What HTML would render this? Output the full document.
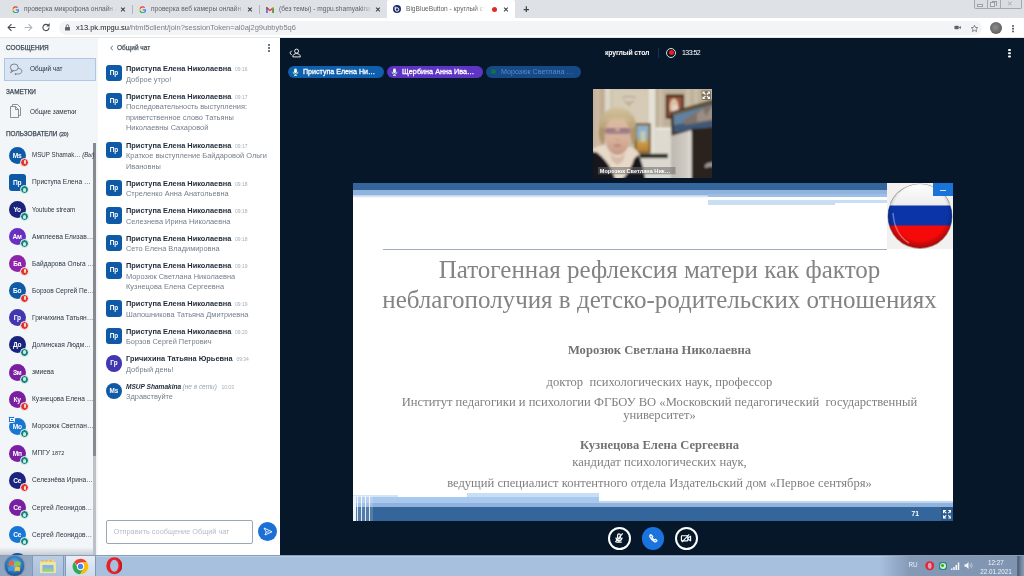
<!DOCTYPE html>
<html lang="ru">
<head>
<meta charset="utf-8">
<title>BigBlueButton - круглый стол</title>
<style>
*{box-sizing:border-box;margin:0;padding:0}
html,body{width:1024px;height:576px;overflow:hidden;background:#06172a}
body{position:relative;font-family:"Liberation Sans",sans-serif;color:#1b2a3a;will-change:transform}
.abs{position:absolute}
.nw{white-space:nowrap}
/* ---------- browser chrome ---------- */
#tabbar{left:0;top:0;width:1024px;height:18px;background:#dee1e6}
#addr{left:0;top:18px;width:1024px;height:19.500px;background:#fff;border-bottom:1px solid #e4e6ea}
.tab{top:0;height:18px;font-size:6.6px;color:#5f6368;line-height:18px}
.tab .t{position:absolute;top:.2px;white-space:nowrap;overflow:hidden;-webkit-mask-image:linear-gradient(90deg,#000 88%,transparent 100%);mask-image:linear-gradient(90deg,#000 88%,transparent 100%)}
.tab .x{position:absolute;top:.5px;font-size:6.5px;color:#3c4043;font-weight:bold}
#omni{left:59px;top:21px;width:923px;height:14px;border-radius:7px;background:#f3f4f6}
/* ---------- sidebar ---------- */
#side{left:0;top:37.5px;width:98.3px;height:518px;background:#f3f6f9}
#chat{left:98.3px;top:37.5px;width:181.7px;height:518px;background:#fff}
.sh{left:6px;font-size:6.6px;color:#3c4854;-webkit-text-stroke:.25px #3c4854;letter-spacing:0;white-space:nowrap;line-height:8px;transform:scaleX(.97);transform-origin:0 0}
.u{left:0;width:96px;height:27px}
.u .av{position:absolute;left:8.7px;top:4.5px;width:17px;height:17px;border-radius:50%;color:#fff;font-size:6.6px;font-weight:bold;text-align:center;line-height:17px;letter-spacing:-.2px}
.u .av.sq{border-radius:3px}
.u .nm{position:absolute;left:31.7px;top:8.1px;font-size:7.1px;color:#2a3642;white-space:nowrap;line-height:10px;transform:scaleX(.93);transform-origin:0 0}
.u .bd{position:absolute;left:20.2px;top:15.900px;width:9px;height:9px;border-radius:50%;border:1px solid #f3f6f9}
.bd.r{background:#e3342a}
.bd.r:after{content:"";position:absolute;left:2.4px;top:1.3px;width:2.2px;height:4px;border-radius:1.1px;background:#fbdcda}
.bd.g:after{content:"";position:absolute;left:2px;top:1.5px;width:3px;height:4px;border-radius:1.5px;background:#c9ebe4}
.bd.g{background:#12857a}
/* ---------- chat ---------- */
.m{left:8px;width:175px}
.m .av{position:absolute;left:0;top:.9px;width:16px;height:16.2px;border-radius:3px;background:#0f5aa6;color:#fff;font-size:6.4px;font-weight:bold;text-align:center;line-height:16px}
.m .av.c{border-radius:50%}
.m .n{position:absolute;left:20px;top:-.2px;font-size:8px;font-weight:bold;color:#1d2a38;white-space:nowrap;line-height:9px;transform:scaleX(.925);transform-origin:0 0}
.m .n i{font-weight:bold}
.m .n s{text-decoration:none;font-weight:normal;font-size:5.4px;color:#a3adb8;margin-left:4px;font-style:normal}
.m .b{position:absolute;left:20px;top:10.2px;font-size:8px;color:#737e8a;white-space:nowrap;line-height:10.6px;transform:scaleX(.925);transform-origin:0 0}
/* ---------- main ---------- */
#main{left:280px;top:37.5px;width:744px;height:518px;background:#06172a}
.pill{top:65.6px;height:12px;border-radius:6px;color:#fff;font-size:7.3px;line-height:12px;white-space:nowrap}
/* ---------- slide ---------- */
#slide{left:352.5px;top:183px;width:600.5px;height:338px;background:#fff;overflow:hidden}
.st{font-family:"Liberation Serif",serif;color:#7f7f7f;white-space:nowrap;text-align:center;left:0;width:600px}
/* ---------- taskbar ---------- */
#task{left:0;top:554.6px;width:1024px;height:22px;background:#a7c0dd;border-top:1px solid #8b9db6;box-shadow:inset 0 1px 0 #b9cde6}
</style>
</head>
<body>
<!-- TABBAR -->
<div id="tabbar" class="abs"></div>
<div class="abs" style="left:386.500px;top:0;width:128.500px;height:18px;background:#fff;border-radius:2px 2px 0 0"></div>
<div class="abs" style="left:132px;top:5px;width:1px;height:9px;background:#b2b6be"></div>
<div class="abs" style="left:259px;top:5px;width:1px;height:9px;background:#b2b6be"></div>
<!-- tab 1 -->
<svg class="abs" style="left:11.800px;top:5.500px" width="7.500" height="7.500" viewBox="0 0 18 18"><path d="M9 3.5a5.5 5.5 0 0 1 3.7 1.4l2-2A8.5 8.5 0 0 0 1.4 5.2l2.4 1.9A5.5 5.5 0 0 1 9 3.500z" fill="#ea4335"/><path d="M3.800 10.900a5.500 5.500 0 0 1 0-3.800L1.400 5.200a8.500 8.500 0 0 0 0 7.600z" fill="#fbbc05"/><path d="M9 17.500a8.400 8.400 0 0 0 5.700-2.100l-2.300-1.800A5.500 5.500 0 0 1 3.800 10.900l-2.400 1.900A8.500 8.500 0 0 0 9 17.500z" fill="#34a853"/><path d="M17.300 9.200c0-.6-.1-1.200-.2-1.700H9v3.300h4.700a4 4 0 0 1-1.300 2.800l2.300 1.800a8.300 8.300 0 0 0 2.600-6.200z" fill="#4285f4"/></svg>
<div class="abs tab" style="left:24px;width:96px"><span class="t" style="left:0;width:94px">проверка микрофона онлайн -</span></div>
<div class="abs tab" style="left:120px"><span class="x" style="left:0">✕</span></div>
<!-- tab 2 -->
<svg class="abs" style="left:138.800px;top:5.500px" width="7.500" height="7.500" viewBox="0 0 18 18"><path d="M9 3.500a5.500 5.500 0 0 1 3.700 1.400l2-2A8.500 8.500 0 0 0 1.400 5.200l2.400 1.900A5.500 5.500 0 0 1 9 3.500z" fill="#ea4335"/><path d="M3.800 10.900a5.500 5.500 0 0 1 0-3.800L1.400 5.200a8.500 8.500 0 0 0 0 7.600z" fill="#fbbc05"/><path d="M9 17.500a8.400 8.400 0 0 0 5.700-2.100l-2.300-1.800A5.500 5.500 0 0 1 3.800 10.900l-2.400 1.900A8.500 8.500 0 0 0 9 17.500z" fill="#34a853"/><path d="M17.300 9.200c0-.6-.1-1.200-.2-1.700H9v3.300h4.700a4 4 0 0 1-1.300 2.800l2.300 1.800a8.300 8.300 0 0 0 2.600-6.200z" fill="#4285f4"/></svg>
<div class="abs tab" style="left:151px;width:96px"><span class="t" style="left:0;width:95px">проверка веб камеры онлайн -</span></div>
<div class="abs tab" style="left:247px"><span class="x" style="left:0">✕</span></div>
<!-- tab 3 gmail -->
<svg class="abs" style="left:266px;top:6.500px" width="8" height="6" viewBox="0 0 20 15"><path d="M0 2v13h4V6l6 4.500L16 6v9h4V2l-2-2-8 6-8-6z" fill="#ea4335"/><path d="M0 2v13h4V5z" fill="#4285f4"/><path d="M20 2v13h-4V5z" fill="#34a853"/><path d="M0 2l4 3V1.200L2 0z" fill="#c5221f"/><path d="M20 2l-4 3V1.200L18 0z" fill="#fbbc05"/></svg>
<div class="abs tab" style="left:279px;width:94px"><span class="t" style="left:0;width:93px">(без темы) - mgpu.shamyakina©</span></div>
<div class="abs tab" style="left:375px"><span class="x" style="left:0">✕</span></div>
<!-- tab 4 active -->
<svg class="abs" style="left:393.300px;top:5px" width="8" height="8" viewBox="0 0 18 18"><circle cx="9" cy="9" r="9" fill="#1a2a6c"/><circle cx="9" cy="10" r="4" fill="none" stroke="#fff" stroke-width="2.200"/><path d="M5 3.500v7" stroke="#fff" stroke-width="2.200"/></svg>
<div class="abs tab" style="left:406px;width:80px"><span class="t" style="left:0;width:79px">BigBlueButton - круглый сто</span></div>
<div class="abs" style="left:492px;top:6.500px;width:5.200px;height:5.200px;border-radius:50%;background:#e02a2a"></div>
<div class="abs tab" style="left:503px"><span class="x" style="left:0">✕</span></div>
<div class="abs" style="left:523.300px;top:2.800px;font-size:10.500px;line-height:12px;color:#3c4043;font-weight:bold">+</div>
<!-- window controls -->
<div class="abs" style="left:973.500px;top:0;width:48px;height:8.500px;border:1px solid #a4a9b1;border-top:0;border-radius:0 0 2px 2px;background:#dadde2"></div>
<div class="abs" style="left:986.500px;top:0;width:1px;height:8px;background:#a4a9b1"></div>
<div class="abs" style="left:999.500px;top:0;width:1px;height:8px;background:#a4a9b1"></div>
<div class="abs" style="left:977px;top:4px;width:6px;height:3px;border:1px solid #9a9fa6;background:#eceef0"></div>
<div class="abs" style="left:990px;top:1.500px;width:5px;height:5px;border:1px solid #9a9fa6;background:#e4e6ea"></div><div class="abs" style="left:991.500px;top:.500px;width:5px;height:5px;border:1px solid #9a9fa6;border-left:0;border-bottom:0"></div>
<div class="abs nw" style="left:1007px;top:0;font-size:6.500px;line-height:8px;color:#a8adb4">✕</div>
<!-- ADDRESS BAR -->
<div id="addr" class="abs"></div>
<div id="omni" class="abs"></div>
<svg class="abs" style="left:7px;top:23px" width="9" height="9" viewBox="0 0 16 16"><path d="M15 8H2M8 2L2 8l6 6" fill="none" stroke="#4a4d51" stroke-width="2"/></svg>
<svg class="abs" style="left:24px;top:23px" width="9" height="9" viewBox="0 0 16 16"><path d="M1 8h13M8 2l6 6-6 6" fill="none" stroke="#b4b7bb" stroke-width="2"/></svg>
<svg class="abs" style="left:41px;top:23px" width="10" height="9" viewBox="0 0 16 16"><path d="M13.500 8A5.500 5.500 0 1 1 11.800 4" fill="none" stroke="#4a4d51" stroke-width="2"/><path d="M14.500 0v6h-6z" fill="#4a4d51"/></svg>
<svg class="abs" style="left:64.800px;top:24.300px" width="5" height="6.600" viewBox="0 0 12 16"><rect x="0" y="7" width="12" height="9" rx="1.500" fill="#5f6368"/><path d="M3 7V4.500a3 3 0 0 1 6 0V7" fill="none" stroke="#5f6368" stroke-width="2"/></svg>
<div class="abs nw" style="left:76px;top:22px;font-size:7.5px;line-height:12px;color:#202124">x13.pk.mpgu.su<span style="color:#7a7f85">/html5client/join?sessionToken=al0aj2g9ubbyb5q6</span></div>
<!-- right icons -->
<svg class="abs" style="left:953.800px;top:25.300px" width="7.300" height="5" viewBox="0 0 18 14"><rect x="0" y="2" width="12" height="10" rx="2" fill="#5f6368"/><path d="M12 7l6-4.500v9z" fill="#5f6368"/></svg>
<svg class="abs" style="left:970px;top:23.500px" width="9" height="9" viewBox="0 0 24 24"><path d="M12 3.500l2.600 5.600 6.100.7-4.500 4.200 1.200 6-5.400-3-5.400 3 1.200-6-4.500-4.200 6.100-.7z" fill="none" stroke="#5f6368" stroke-width="2"/></svg>
<div class="abs" style="left:989.800px;top:21.600px;width:12.300px;height:12.300px;border-radius:50%;background:radial-gradient(circle at 45% 45%,#8e8e8e,#6a6a6a 55%,#4a4a4a)"></div>
<div class="abs" style="left:1012.100px;top:25px;width:1.600px;height:1.600px;border-radius:50%;background:#5f6368;box-shadow:0 2.700px 0 #5f6368,0 5.400px 0 #5f6368"></div>
<!-- SIDEBAR -->
<div id="side" class="abs"></div>
<div class="abs sh" style="top:44px">СООБЩЕНИЯ</div>
<div class="abs" style="left:4px;top:58px;width:92px;height:23px;background:#d9e5f2;border:1px solid #afc6e2"></div>
<svg class="abs" style="left:9px;top:62.500px" width="14.500" height="12" viewBox="0 0 34 30"><ellipse cx="12" cy="11" rx="10" ry="8.500" fill="none" stroke="#56616d" stroke-width="1.800"/><path d="M6 18l-3 6 7-4" fill="none" stroke="#56616d" stroke-width="1.800"/><path d="M22 13.500c5 0 9 3 9 7s-4 7-9 7a10 10 0 0 1-3-.5l-5 2 2-4" fill="none" stroke="#56616d" stroke-width="1.800"/></svg>
<div class="abs nw" style="left:30px;top:64px;font-size:6.400px;line-height:10px;color:#2a3642">Общий чат</div>
<div class="abs sh" style="top:87.500px">ЗАМЕТКИ</div>
<svg class="abs" style="left:10px;top:104px" width="11" height="14" viewBox="0 0 22 28"><path d="M5 5V1h10l6 6v16h-4" fill="none" stroke="#66717d" stroke-width="1.500"/><path d="M1 5h10l6 6v16H1z" fill="none" stroke="#66717d" stroke-width="1.500"/><path d="M11 5v6h6" fill="none" stroke="#66717d" stroke-width="1.500"/></svg>
<div class="abs nw" style="left:30px;top:107px;font-size:6.400px;line-height:10px;color:#2a3642">Общие заметки</div>
<div class="abs sh" style="top:129.500px">ПОЛЬЗОВАТЕЛИ <span style="font-size:5.400px">(20)</span></div>
<div class="abs" style="left:93.200px;top:142.500px;width:3px;height:313px;background:#868a91"></div><div class="abs" style="left:93.200px;top:455.500px;width:3px;height:100px;background:#bcc1c7"></div><div class="abs" style="left:0;top:547px;width:93px;height:8px;background:linear-gradient(rgba(120,130,145,0),rgba(120,130,145,.35))"></div>
<div class="abs u" style="top:142.30px"><div class="av" style="background:#0f5aa6">Ms</div><div class="bd r"></div><div class="nm" style="transform:scaleX(.875)">MSUP Shamak… <i style="font-size:6.800px">(Вы)</i></div></div>
<div class="abs u" style="top:169.39px"><div class="av sq" style="background:#0f5aa6">Пр</div><div class="bd g"></div><div class="nm">Приступа Елена …</div></div>
<div class="abs u" style="top:196.48px"><div class="av" style="background:#1a237e">Yo</div><div class="bd g"></div><div class="nm" style="transform:scaleX(.875)">Youtube stream</div></div>
<div class="abs u" style="top:223.57px"><div class="av" style="background:#6a2fc0">Ам</div><div class="bd g"></div><div class="nm">Амплеева Елизав…</div></div>
<div class="abs u" style="top:250.66px"><div class="av" style="background:#8e24aa">Ба</div><div class="bd r"></div><div class="nm">Байдарова Ольга …</div></div>
<div class="abs u" style="top:277.75px"><div class="av" style="background:#0f5aa6">Бо</div><div class="bd r"></div><div class="nm">Борзов Сергей Пе…</div></div>
<div class="abs u" style="top:304.84px"><div class="av" style="background:#4138b0">Гр</div><div class="bd r"></div><div class="nm">Гричихина Татьян…</div></div>
<div class="abs u" style="top:331.93px"><div class="av" style="background:#1a237e">До</div><div class="bd g"></div><div class="nm">Долинская Людм…</div></div>
<div class="abs u" style="top:359.02px"><div class="av" style="background:#7b1fa2">Зм</div><div class="bd g"></div><div class="nm">змиева</div></div>
<div class="abs u" style="top:386.11px"><div class="av" style="background:#7b1fa2">Ку</div><div class="bd r"></div><div class="nm">Кузнецова Елена …</div></div>
<div class="abs u" style="top:413.20px"><div class="av" style="background:#1976d2">Мо</div><div class="bd g"></div><div class="nm">Морозюк Светлан…</div><div style="position:absolute;left:8px;top:2.800px;width:6.800px;height:6.800px;border-radius:1.500px;background:#1b73de;border:.5px solid #f3f6f9"><div style="position:absolute;left:1.300px;top:1.500px;width:3.600px;height:2.600px;border:.8px solid #fff"></div></div></div>
<div class="abs u" style="top:440.29px"><div class="av" style="background:#7b1fa2">Мп</div><div class="bd g"></div><div class="nm">МПГУ <span style="font-size:6px">1872</span></div></div>
<div class="abs u" style="top:467.38px"><div class="av" style="background:#1a237e">Се</div><div class="bd r"></div><div class="nm">Селезнёва Ирина…</div></div>
<div class="abs u" style="top:494.47px"><div class="av" style="background:#7b1fa2">Се</div><div class="bd g"></div><div class="nm">Сергей Леонидов…</div></div>
<div class="abs u" style="top:521.56px"><div class="av" style="background:#1976d2">Се</div><div class="bd g"></div><div class="nm">Сергей Леонидов…</div></div>
<div class="abs" style="left:8.700px;top:553.200px;width:17px;height:8px;border-radius:8.500px 8.500px 0 0;background:#0f5aa6"></div>
<div id="chat" class="abs"></div>
<svg class="abs" style="left:109.500px;top:45.300px" width="3.500" height="6" viewBox="0 0 7 12"><path d="M6 1L1.500 6 6 11" fill="none" stroke="#4a5562" stroke-width="1.700"/></svg><div class="abs nw" style="left:117.400px;top:43.200px;font-size:6.900px;line-height:10px;color:#44505c;-webkit-text-stroke:.25px #44505c;transform:scaleX(.95);transform-origin:0 0">Общий чат</div>
<div class="abs" style="left:268px;top:44px;width:2px;height:2px;border-radius:50%;background:#3c4854;box-shadow:0 3px 0 #3c4854,0 6px 0 #3c4854"></div>
<div class="abs m" style="left:106px;top:65.500px"><div class="av" style="background:#0f5aa6;top:-.300px">Пр</div><div class="n" style="top:-1.600px">Приступа Елена Николаевна<s>09:16</s></div><div class="b" style="top:9.400px">Доброе утро!</div></div>
<div class="abs m" style="left:106px;top:92px"><div class="av" style="background:#0f5aa6">Пр</div><div class="n">Приступа Елена Николаевна<s>09:17</s></div><div class="b">Последовательность выступления:<br>приветственное слово Татьяны<br>Николаевны Сахаровой</div></div>
<div class="abs m" style="left:106px;top:141px"><div class="av" style="background:#0f5aa6">Пр</div><div class="n">Приступа Елена Николаевна<s>09:17</s></div><div class="b">Краткое выступление Байдаровой Ольги<br>Ивановны</div></div>
<div class="abs m" style="left:106px;top:179px"><div class="av" style="background:#0f5aa6">Пр</div><div class="n">Приступа Елена Николаевна<s>09:18</s></div><div class="b">Стреленко Анна Анатольевна</div></div>
<div class="abs m" style="left:106px;top:206.5px"><div class="av" style="background:#0f5aa6">Пр</div><div class="n">Приступа Елена Николаевна<s>09:18</s></div><div class="b">Селезнева Ирина Николаевна</div></div>
<div class="abs m" style="left:106px;top:234px"><div class="av" style="background:#0f5aa6">Пр</div><div class="n">Приступа Елена Николаевна<s>09:18</s></div><div class="b">Сето Елена Владимировна</div></div>
<div class="abs m" style="left:106px;top:261.5px"><div class="av" style="background:#0f5aa6">Пр</div><div class="n">Приступа Елена Николаевна<s>09:19</s></div><div class="b">Морозюк Светлана Николаевна<br>Кузнецова Елена Сергеевна</div></div>
<div class="abs m" style="left:106px;top:299.5px"><div class="av" style="background:#0f5aa6">Пр</div><div class="n">Приступа Елена Николаевна<s>09:19</s></div><div class="b">Шапошникова Татьяна Дмитриевна</div></div>
<div class="abs m" style="left:106px;top:327px"><div class="av" style="background:#0f5aa6">Пр</div><div class="n">Приступа Елена Николаевна<s>09:20</s></div><div class="b">Борзов Сергей Петрович</div></div>
<div class="abs m" style="left:106px;top:354.5px"><div class="av c" style="background:#4138b0">Гр</div><div class="n">Гричихина Татьяна Юрьевна<s>09:34</s></div><div class="b">Добрый день!</div></div>
<div class="abs m" style="left:106px;top:382px"><div class="av c" style="background:#0f5aa6">Ms</div><div class="n"><i style="font-size:7.100px">MSUP Shamakina</i><s style="margin-left:1.500px;font-size:7px;color:#98a2ad"><i style="font-weight:normal">(не в сети)</i></s><s style="margin-left:5px">10:03</s></div><div class="b">Здравствуйте</div></div>
<div class="abs" style="left:106px;top:520px;width:147px;height:24px;border:1px solid #9aa7b6;border-radius:2px;background:#fff"></div>
<div class="abs nw" style="left:113.500px;top:527px;font-size:7.330px;line-height:10px;color:#b4bcc6">Отправить сообщение Общий чат</div>
<div class="abs" style="left:258px;top:522px;width:19px;height:19px;border-radius:50%;background:#1b6fd6"></div>
<svg class="abs" style="left:263px;top:527px" width="10" height="9" viewBox="0 0 20 18"><path d="M2 2l16 7.500L4 16l2.500-6z" fill="none" stroke="#fff" stroke-width="1.800" stroke-linejoin="round"/><path d="M6.500 10L12 9.500" stroke="#fff" stroke-width="1.500"/></svg>
<!-- MAIN -->
<div id="main" class="abs"></div>
<svg class="abs" style="left:288.800px;top:47.800px" width="12.500" height="9.800" viewBox="0 0 28 22"><path d="M6 6L2 11l4 5" fill="none" stroke="#fff" stroke-width="2"/><circle cx="17" cy="7" r="4.500" fill="none" stroke="#fff" stroke-width="2"/><path d="M8.500 20c0-5 4-7.500 8.500-7.500s8.500 2.500 8.500 7.500z" fill="none" stroke="#fff" stroke-width="2" stroke-linejoin="round"/></svg>
<div class="abs nw" style="left:605px;top:47px;font-size:6.900px;line-height:11px;color:#fff;font-weight:bold;letter-spacing:-.15px">круглый стол</div>
<div class="abs" style="left:658px;top:48px;width:1px;height:10px;background:#152f58"></div>
<div class="abs" style="left:666px;top:47.500px;width:10px;height:10px;border-radius:50%;border:1px solid #d8dde4"></div>
<div class="abs" style="left:668.500px;top:50px;width:5px;height:5px;border-radius:50%;background:#ee1c1c"></div>
<div class="abs nw" style="left:682px;top:46.800px;font-size:7px;line-height:11px;color:#fff;letter-spacing:-.55px">133:52</div>
<div class="abs" style="left:1008.200px;top:48.600px;width:2.400px;height:2.400px;border-radius:50%;background:#fff;box-shadow:0 3.200px 0 #fff,0 6.400px 0 #fff"></div>
<!-- talking pills -->
<div class="abs pill" style="left:288px;width:96px;background:#0e5fae"><svg style="position:absolute;left:4px;top:2px" width="7" height="8" viewBox="0 0 14 16"><rect x="4.200" y="1" width="5.600" height="9.500" rx="2.800" fill="#f2fff5"/><path d="M2 7.500a5 5 0 0 0 10 0M7 12.500V15M4 15h6" fill="none" stroke="#a8f0bc" stroke-width="1.900"/></svg><span style="position:absolute;left:14.600px;top:0;font-size:7.900px;-webkit-text-stroke:.3px #fff;transform:scaleX(.9);transform-origin:0 0">Приступа Елена Ни…</span></div>
<div class="abs pill" style="left:387px;width:96px;background:#5d34c4"><svg style="position:absolute;left:4px;top:2px" width="7" height="8" viewBox="0 0 14 16"><rect x="4.200" y="1" width="5.600" height="9.500" rx="2.800" fill="#f2fff5"/><path d="M2 7.500a5 5 0 0 0 10 0M7 12.500V15M4 15h6" fill="none" stroke="#a8f0bc" stroke-width="1.900"/></svg><span style="position:absolute;left:14.600px;top:0;font-size:7.900px;-webkit-text-stroke:.3px #fff;transform:scaleX(.92);transform-origin:0 0">Щербина Анна Ива…</span></div>
<div class="abs pill" style="left:486px;width:95px;background:#154a86"><span style="position:absolute;left:5px;top:3.500px;width:5px;height:5px;border-radius:50%;background:#14704a"></span><span style="position:absolute;left:14.600px;top:0;font-size:7.900px;color:#5a8bc2;transform:scaleX(.905);transform-origin:0 0">Морозюк Светлана …</span></div>
<!-- webcam -->
<svg class="abs" style="left:593px;top:88.500px" width="119" height="89.500" viewBox="0 0 119 89.500">
<defs><filter id="bl" x="-5%" y="-5%" width="110%" height="110%"><feGaussianBlur stdDeviation="0.800"/></filter>
<filter id="bl2" x="-20%" y="-20%" width="140%" height="140%"><feGaussianBlur stdDeviation="1.800"/></filter>
<clipPath id="cc"><rect width="119" height="89.500"/></clipPath>
<linearGradient id="cab" x1="0" y1="0" x2="1" y2="0"><stop offset="0" stop-color="#bcb8ae"/><stop offset=".8" stop-color="#d2cec6"/><stop offset="1" stop-color="#e8e5de"/></linearGradient>
<linearGradient id="pic" x1="0" y1="0" x2="0" y2="1"><stop offset="0" stop-color="#86b0d4"/><stop offset=".45" stop-color="#8fb0c0"/><stop offset=".7" stop-color="#c89a40"/><stop offset="1" stop-color="#b8803a"/></linearGradient>
<linearGradient id="hair" x1="0" y1="0" x2="0" y2="1"><stop offset="0" stop-color="#d2c29c"/><stop offset=".5" stop-color="#bca680"/><stop offset="1" stop-color="#a88e68"/></linearGradient>
<linearGradient id="face" x1="0" y1="0" x2="0" y2="1"><stop offset="0" stop-color="#dcbca2"/><stop offset=".6" stop-color="#d6b09a"/><stop offset="1" stop-color="#c49a86"/></linearGradient>
</defs>
<g clip-path="url(#cc)"><g filter="url(#bl)">
<rect x="-3" y="-3" width="125" height="96" fill="#c5b8a1"/>
<rect x="-3" y="-3" width="16" height="72" fill="#c6b29a"/>
<rect x="3" y="-3" width="2.500" height="72" fill="#cdbba6"/>
<rect x="8" y="-3" width="2" height="72" fill="#bda88e"/>
<rect x="12" y="-3" width="5.500" height="72" fill="#dcd7cc"/>
<rect x="17.500" y="-3" width="39" height="44" fill="#cfc4ad"/>
<rect x="20" y="1" width="34" height="36" fill="#d5cbb6"/>
<path d="M29 9c3-2 11-2 14 0M31 12c3 2 7 2 10 0M34 14l2 3 2-3" stroke="#a59a86" stroke-width="1" fill="none"/>
<rect x="55.500" y="-3" width="7" height="96" fill="#e5e1d8"/>
<rect x="62.500" y="-3" width="60" height="44" fill="#bfb199"/>
<rect x="66" y="-3" width="3.500" height="44" fill="#cbbea8"/>
<rect x="93" y="-3" width="4" height="20" fill="#cbbea8"/>
<rect x="101" y="-3" width="4" height="18" fill="#c9bca6"/>
<rect x="62.500" y="40" width="16" height="52" fill="#dedad0"/>
<rect x="62.500" y="38.500" width="16" height="2.500" fill="#eae7e0"/>
<rect x="72.800" y="5.500" width="18.200" height="24" fill="#47221a"/>
<rect x="75" y="8" width="14" height="19" fill="#95543c"/>
<ellipse cx="81" cy="17.500" rx="4.300" ry="8" fill="#dcc2a2"/>
<ellipse cx="82.500" cy="20" rx="3" ry="4" fill="#ead2cc"/>
<polygon points="77.500,23 122,10 122,40 78.500,47" fill="#3a3122"/>
<polygon points="78.500,24.500 122,11.800 122,13 79,25.800" fill="#8a7440"/>
<polygon points="80.500,26 122,14.500 122,37 81,43.500" fill="#64809f"/>
<polygon points="80.800,36 122,29 122,37 81,43.500" fill="#3f5878"/>
<polygon points="90,32 99,26 106,22 112,18 122,16 122,31 92,36" fill="#7d7268"/>
<polygon points="104,25 110,20 113,27 118,19 122,18 122,30 104,33" fill="#9a8e84"/>
<polygon points="78,47 98.700,41 98.700,92 78,92" fill="url(#cab)"/>
<rect x="98.700" y="39.500" width="24" height="53" fill="#2a201e"/>
<path d="M112 76c2-2 5-3 9-2.500v4c-3 0-6 .5-9 1.500z" fill="#9a948e"/>
<rect x="41.500" y="34" width="16.300" height="30.500" fill="#86662e"/>
<rect x="44" y="36.500" width="11.500" height="25.500" fill="url(#pic)"/>
<rect x="47.500" y="42" width="5" height="11" fill="#d8d4b0" fill-opacity=".7"/>
<rect x="46.500" y="64.800" width="28.500" height="4.500" fill="#1e1a1c"/>
<rect x="48" y="69.300" width="30" height="23" fill="#dcd8d0"/>
<!-- woman -->
<path d="M-3 62 C4 56 12 55 18 57 L38 58 C45 60 47 66 47.500 72 L40 92 L14 92 L2 72z" fill="#e6d9c8"/>
<path d="M-3 62 L4 63.500 C10 68 15 74 19 82 L23 92 L-3 92z" fill="#17161a"/>
<path d="M45 66 C48 70 51 80 52.500 92 L27 92 C33 88 38 80 41 70z" fill="#17161a"/>
<path d="M16 62 C19 70 30 70 33 62 L30 72 L24.500 76 L19 72z" fill="#d8bba6"/>
<ellipse cx="24.500" cy="36" rx="18.500" ry="17.500" fill="url(#hair)"/>
<path d="M6.500 38 C4.500 46 6.500 53 11 55 L12 40z" fill="#ac946c"/>
<path d="M42.500 38 C44.500 46 43.500 53 39 56 L37 40z" fill="#ac946c"/>
<ellipse cx="24.500" cy="47" rx="12.800" ry="19" fill="url(#face)"/>
<path d="M11.500 34 C14 24.500 35 24.500 37.500 34 C32 29 17 29 11.500 34z" fill="#cbb890"/>
<rect x="12" y="39.500" width="25" height="5.500" rx="2.500" fill="#8a6682" fill-opacity=".7"/>
<rect x="22.500" y="40.200" width="4" height="2" fill="#d4ae98"/>
<path d="M13 39.800h9M27 39.800h9" stroke="#6a4a5e" stroke-width=".8" stroke-opacity=".75"/>
<ellipse cx="24.500" cy="56.500" rx="4" ry="1" fill="#b47a6e"/>
<path d="M22.800 50c1 1.200 2.500 1.200 3.500 0" stroke="#b88e7a" stroke-width=".9" fill="none"/>
</g>
<rect x="5" y="78" width="77.500" height="7.300" fill="#6a6a6a" fill-opacity=".55"/>
<text x="6.800" y="84" font-family="Liberation Sans, sans-serif" font-weight="bold" font-size="5.600" fill="#fff">Морозюк Светлана Ник…</text>
<rect x="108.500" y="1.500" width="9.500" height="9.500" rx="1" fill="#40382c" fill-opacity=".5"/>
<g stroke="#fff" stroke-width="1.100" fill="none"><path d="M110 4.800V3h1.800M116.500 4.800V3h-1.800M110 7.700v1.800h1.800M116.500 7.700v1.800h-1.800"/><path d="M110.300 3.300l2.200 2.200M116.200 3.300l-2.200 2.200M110.300 9.200l2.200-2.200M116.200 9.200l-2.200-2.200"/></g>
</g></svg>
<div id="slide" class="abs">
<div class="abs" style="left:0;top:0;width:600px;height:7px;background:#34659b"></div>
<div class="abs" style="left:0;top:7px;width:600px;height:4.500px;background:#8fb3dc"></div>
<div class="abs" style="left:0;top:11.500px;width:355px;height:3px;background:linear-gradient(#b4cdea,#fff)"></div>
<div class="abs" style="left:355px;top:11px;width:180px;height:3px;background:#9dbfe6"></div>
<div class="abs" style="left:355px;top:17px;width:180px;height:4.500px;background:#c8def5"></div>
<div class="abs" style="left:482px;top:19.500px;width:53px;height:2px;background:#fff"></div>
<!-- flag -->
<div class="abs" style="left:534px;top:0;width:66px;height:66px;background:#f3f1ef"></div>
<svg class="abs" style="left:534px;top:0" width="66" height="66" viewBox="0 0 66 66">
<defs><clipPath id="fc"><circle cx="33" cy="33" r="32"/></clipPath>
<radialGradient id="fg" cx="50%" cy="45%" r="55%"><stop offset="75%" stop-color="#000" stop-opacity="0"/><stop offset="100%" stop-color="#000" stop-opacity=".35"/></radialGradient>
<linearGradient id="fw" x1="0" y1="0" x2="0" y2="1"><stop offset="0" stop-color="#fff"/><stop offset="1" stop-color="#ececec"/></linearGradient></defs>
<circle cx="33" cy="33.500" r="32.500" fill="#9a9690"/><path d="M4 20A32 32 0 0 1 62 20" fill="none" stroke="#8a8680" stroke-width="1.600"/>
<g clip-path="url(#fc)"><rect x="0" y="0" width="66" height="23" fill="url(#fw)"/><rect x="0" y="22.500" width="66" height="20.500" fill="#0a34a8"/><rect x="0" y="42.500" width="66" height="24" fill="#f50a0a"/><rect x="0" y="0" width="66" height="66" fill="url(#fg)"/>
<path d="M6 30C7 44 12 54 22 60" fill="none" stroke="#fff" stroke-opacity=".35" stroke-width="1.500"/></g>
</svg>
<div class="abs" style="left:580px;top:0;width:20px;height:12.500px;background:#1a73d9"></div>
<div class="abs" style="left:587px;top:6.500px;width:6px;height:1px;background:#cfe2fa"></div>
<!-- rule -->
<div class="abs" style="left:30px;top:65.500px;width:504px;height:1px;background:#a3adba"></div>
<!-- text -->
<div class="abs st" style="left:7px;top:72px;font-size:25.030px;line-height:30px;color:#838383">Патогенная рефлексия матери как фактор<br>неблагополучия в детско-родительских отношениях</div>
<div class="abs st" style="left:7px;top:160px;font-size:12.580px;line-height:14px;font-weight:bold;color:#727272">Морозюк Светлана Николаевна</div>
<div class="abs st" style="left:7px;top:191.500px;font-size:12.580px;line-height:14px">доктор&nbsp; психологических наук, профессор</div>
<div class="abs st" style="left:7px;top:213px;font-size:12.580px;line-height:13px">Институт педагогики и психологии ФГБОУ ВО «Московский педагогический&nbsp; государственный<br>университет»</div>
<div class="abs st" style="left:7px;top:255px;font-size:12.580px;line-height:14px;font-weight:bold;color:#727272">Кузнецова Елена Сергеевна</div>
<div class="abs st" style="left:7px;top:271.800px;font-size:12.580px;line-height:14px">кандидат психологических наук,</div>
<div class="abs st" style="left:7px;top:293px;font-size:12.580px;line-height:14px">ведущий специалист контентного отдела Издательский дом «Первое сентября»</div>
<!-- bottom bands -->
<div class="abs" style="left:114px;top:310.400px;width:132px;height:3.200px;background:#c8def5"></div>
<div class="abs" style="left:0;top:313.500px;width:246px;height:6.500px;background:#a8c8ee"></div>
<div class="abs" style="left:0;top:312px;width:45px;height:2px;background:#d4e4f7"></div>
<div class="abs" style="left:246px;top:317.500px;width:354px;height:2.500px;background:#c0d6f0"></div>
<div class="abs" style="left:0;top:319.800px;width:600px;height:4.400px;background:#8fb3dc"></div>
<div class="abs" style="left:0;top:324px;width:600px;height:14px;background:#34659b"></div>
<div class="abs" style="left:0;top:313px;width:20px;height:25px;background:repeating-linear-gradient(90deg,rgba(255,255,255,.85) 0,rgba(255,255,255,.85) 1.500px,rgba(255,255,255,.15) 1.500px,rgba(255,255,255,.15) 4px)"></div>
<div class="abs" style="left:0;top:313px;width:3px;height:25px;background:#eef4fb"></div>
<div class="abs nw" style="left:559px;top:326px;font-size:6.700px;line-height:10px;font-weight:bold;color:#fff">71</div><div class="abs" style="left:588px;top:324px;width:13px;height:14px;background:#2c5a8e"></div>
<svg class="abs" style="left:590px;top:327px" width="8.500" height="8.500" viewBox="0 0 16 16"><g stroke="#fff" stroke-width="2.200" fill="none" stroke-linecap="round"><path d="M1 5V1h4M15 5V1h-4M1 11v4h4M15 11v4h-4M1.500 1.500l4 4M14.500 1.500l-4 4M1.500 14.500l4-4M14.500 14.500l-4-4"/></g></svg>
</div>
<!-- controls -->
<div class="abs" style="left:607.700px;top:526.700px;width:23px;height:23px;border-radius:50%;border:2px solid #fff"></div>
<svg class="abs" style="left:613.200px;top:532px" width="12" height="12" viewBox="0 0 26 26"><rect x="10" y="4" width="6" height="11" rx="3" fill="none" stroke="#fff" stroke-width="2.600"/><path d="M6.500 12a6.500 6.500 0 0 0 13 0M13 18.500V22M7 22h12" fill="none" stroke="#fff" stroke-width="2.600"/><path d="M5 22L21 3" stroke="#fff" stroke-width="2.400"/></svg>
<div class="abs" style="left:641.500px;top:527px;width:22.500px;height:22.500px;border-radius:50%;background:#1b73de"></div>
<svg class="abs" style="left:647.500px;top:533px" width="10.500" height="10.500" viewBox="0 0 22 22"><path d="M6 3.500c-2.200 1-2.800 3-1.800 5 2 4.500 5 7.500 9.500 9.500 2 1 4 .3 5-1.800l-3-3-2.200 1.300c-2-1-4-3-5-5L9.800 7.300z" fill="none" stroke="#fff" stroke-width="2.700" stroke-linejoin="round"/></svg>
<div class="abs" style="left:674.700px;top:526.700px;width:23px;height:23px;border-radius:50%;border:2px solid #fff"></div>
<svg class="abs" style="left:680px;top:532.500px" width="12" height="11" viewBox="0 0 26 24"><rect x="3" y="6" width="14" height="11" rx="1" fill="none" stroke="#fff" stroke-width="2.600"/><path d="M17 11l6-4v10l-6-4" fill="none" stroke="#fff" stroke-width="2.600" stroke-linejoin="round"/><path d="M4 20L20 3" stroke="#fff" stroke-width="2.400"/></svg>
<!-- TASKBAR -->
<div id="task" class="abs"></div>
<div class="abs" style="left:0;top:556px;width:32px;height:20px;background:linear-gradient(90deg,#8ea4bf,#93a9c4)"></div>
<div class="abs" style="left:880px;top:556px;width:144px;height:20px;background:linear-gradient(90deg,rgba(128,148,178,0),#8499b6 30px,#7f94b1)"></div>
<!-- start orb -->
<div class="abs" style="left:4.500px;top:556px;width:19.500px;height:19.500px;border-radius:50%;background:radial-gradient(circle at 50% 40%,#7cc0ee,#2e78c0 50%,#1b4a88 80%,#2a8aa8 100%);box-shadow:0 0 1.500px #1a2c48"></div>
<svg class="abs" style="left:7.300px;top:559px" width="14" height="14" viewBox="0 0 24 24"><path d="M2 5c3-2 6-2 9 0v7c-3-2-6-2-9 0z" fill="#f0642c" transform="skewX(-6) translate(2,0)"/><path d="M13 5.500c3-2 6-2 9 0v7c-3-2-6-2-9 0z" fill="#8ccb3c" transform="skewX(-6) translate(2,0)"/><path d="M1 14c3-2 6-2 9 0v7c-3-2-6-2-9 0z" fill="#3a9ae8" transform="skewX(-6) translate(3,0)"/><path d="M12 14.500c3-2 6-2 9 0v7c-3-2-6-2-9 0z" fill="#f8c83a" transform="skewX(-6) translate(3,0)"/></svg>
<!-- explorer -->
<div class="abs" style="left:32px;top:556px;width:31.500px;height:20px;background:linear-gradient(#b9cde6,#a9c0dc);border:1px solid #8398b4;border-top:0;border-bottom:0"></div>
<svg class="abs" style="left:39px;top:558px" width="18" height="16" viewBox="0 0 36 32"><path d="M3 6h10l2-3h16v6H3z" fill="#e8d48a"/><rect x="2" y="8" width="32" height="22" rx="1.500" fill="#f2e3a4"/><rect x="5" y="4" width="4" height="3" fill="#d8b850"/><rect x="13" y="4" width="4" height="3" fill="#d8b850"/><rect x="21" y="4" width="4" height="3" fill="#d8b850"/><rect x="7" y="14" width="22" height="13" fill="#7fb6e6"/><rect x="7" y="21" width="22" height="6" fill="#9ad07a"/></svg>
<!-- chrome -->
<div class="abs" style="left:65px;top:556px;width:31px;height:20px;background:linear-gradient(#e6edf6,#cddbec);border:1px solid #8398b4;border-top:0;border-bottom:0"></div>
<svg class="abs" style="left:72px;top:557.500px" width="17" height="17" viewBox="0 0 48 48"><circle cx="24" cy="24" r="22" fill="#fff"/><path d="M24 2A22 22 0 0 1 43.050 13H24a11 11 0 0 0-10.300 7.200L6.300 10.500A22 22 0 0 1 24 2z" fill="#ea4335"/><path d="M43.050 13A22 22 0 0 1 23 46l9.500-16.500A11 11 0 0 0 33.500 18.500 11 11 0 0 0 30 13z" fill="#fbbc05"/><path d="M23 46A22 22 0 0 1 6.300 10.500l8.200 14.200A11 11 0 0 0 24 35a11 11 0 0 0 8.500-5.500z" fill="#34a853"/><circle cx="24" cy="24" r="9.500" fill="#fff"/><circle cx="24" cy="24" r="7.500" fill="#4285f4"/></svg>
<!-- opera -->
<svg class="abs" style="left:105.500px;top:557px" width="16.500" height="17.500" viewBox="0 0 33 35"><ellipse cx="16.500" cy="17.500" rx="16" ry="17" fill="#e8202a"/><ellipse cx="16.500" cy="17.500" rx="8.300" ry="12.200" fill="#a7c0dd"/><path d="M16.500 .5a16 17 0 0 1 0 34a12 17 0 0 0 0-34z" fill="#b01018" fill-opacity=".55"/></svg>
<!-- tray -->
<div class="abs nw" style="left:908.500px;top:560px;font-size:6.300px;line-height:9px;color:#eef2f8">RU</div>
<svg class="abs" style="left:924.500px;top:561px" width="9.500" height="9.500" viewBox="0 0 20 20"><ellipse cx="10" cy="10" rx="9.500" ry="9.500" fill="#e02838"/><ellipse cx="10" cy="10" rx="4" ry="6.500" fill="#d8a0b0"/></svg>
<div class="abs" style="left:938.500px;top:561.700px;width:8.200px;height:8.200px;border-radius:2.500px;background:#1d8a8c"></div>
<div class="abs" style="left:939.600px;top:562.800px;width:6px;height:6px;border-radius:50%;background:#d8f0c0"></div>
<div class="abs" style="left:941px;top:564.200px;width:3.200px;height:3.200px;border-radius:50%;background:#2da82a"></div>
<svg class="abs" style="left:950.500px;top:561.500px" width="9" height="8" viewBox="0 0 18 16"><path d="M0 16h3v-3H0zM4.500 16h3V10h-3zM9 16h3V6H9zM13.500 16h3V1h-3z" fill="#f4f6fa"/></svg>
<svg class="abs" style="left:963.500px;top:561px" width="9" height="9" viewBox="0 0 18 18"><path d="M1 6.500h3.500L9 2v14L4.500 11.500H1z" fill="#f4f6fa"/><path d="M12 6a4.500 4.500 0 0 1 0 6M14 3.500a8 8 0 0 1 0 11" fill="none" stroke="#dfe6f0" stroke-width="1.200"/></svg>
<div class="abs nw" style="left:976px;top:557.500px;width:40px;text-align:center;font-size:6.300px;line-height:9px;color:#f2f5fa">12:27<br>22.01.2021</div>
<div class="abs" style="left:1016.500px;top:556px;width:7.500px;height:20px;background:linear-gradient(90deg,#4e5d73,#6c7d96 40%,#8a9bb4);border-left:1px solid #5a6a80"></div>
</body>
</html>
